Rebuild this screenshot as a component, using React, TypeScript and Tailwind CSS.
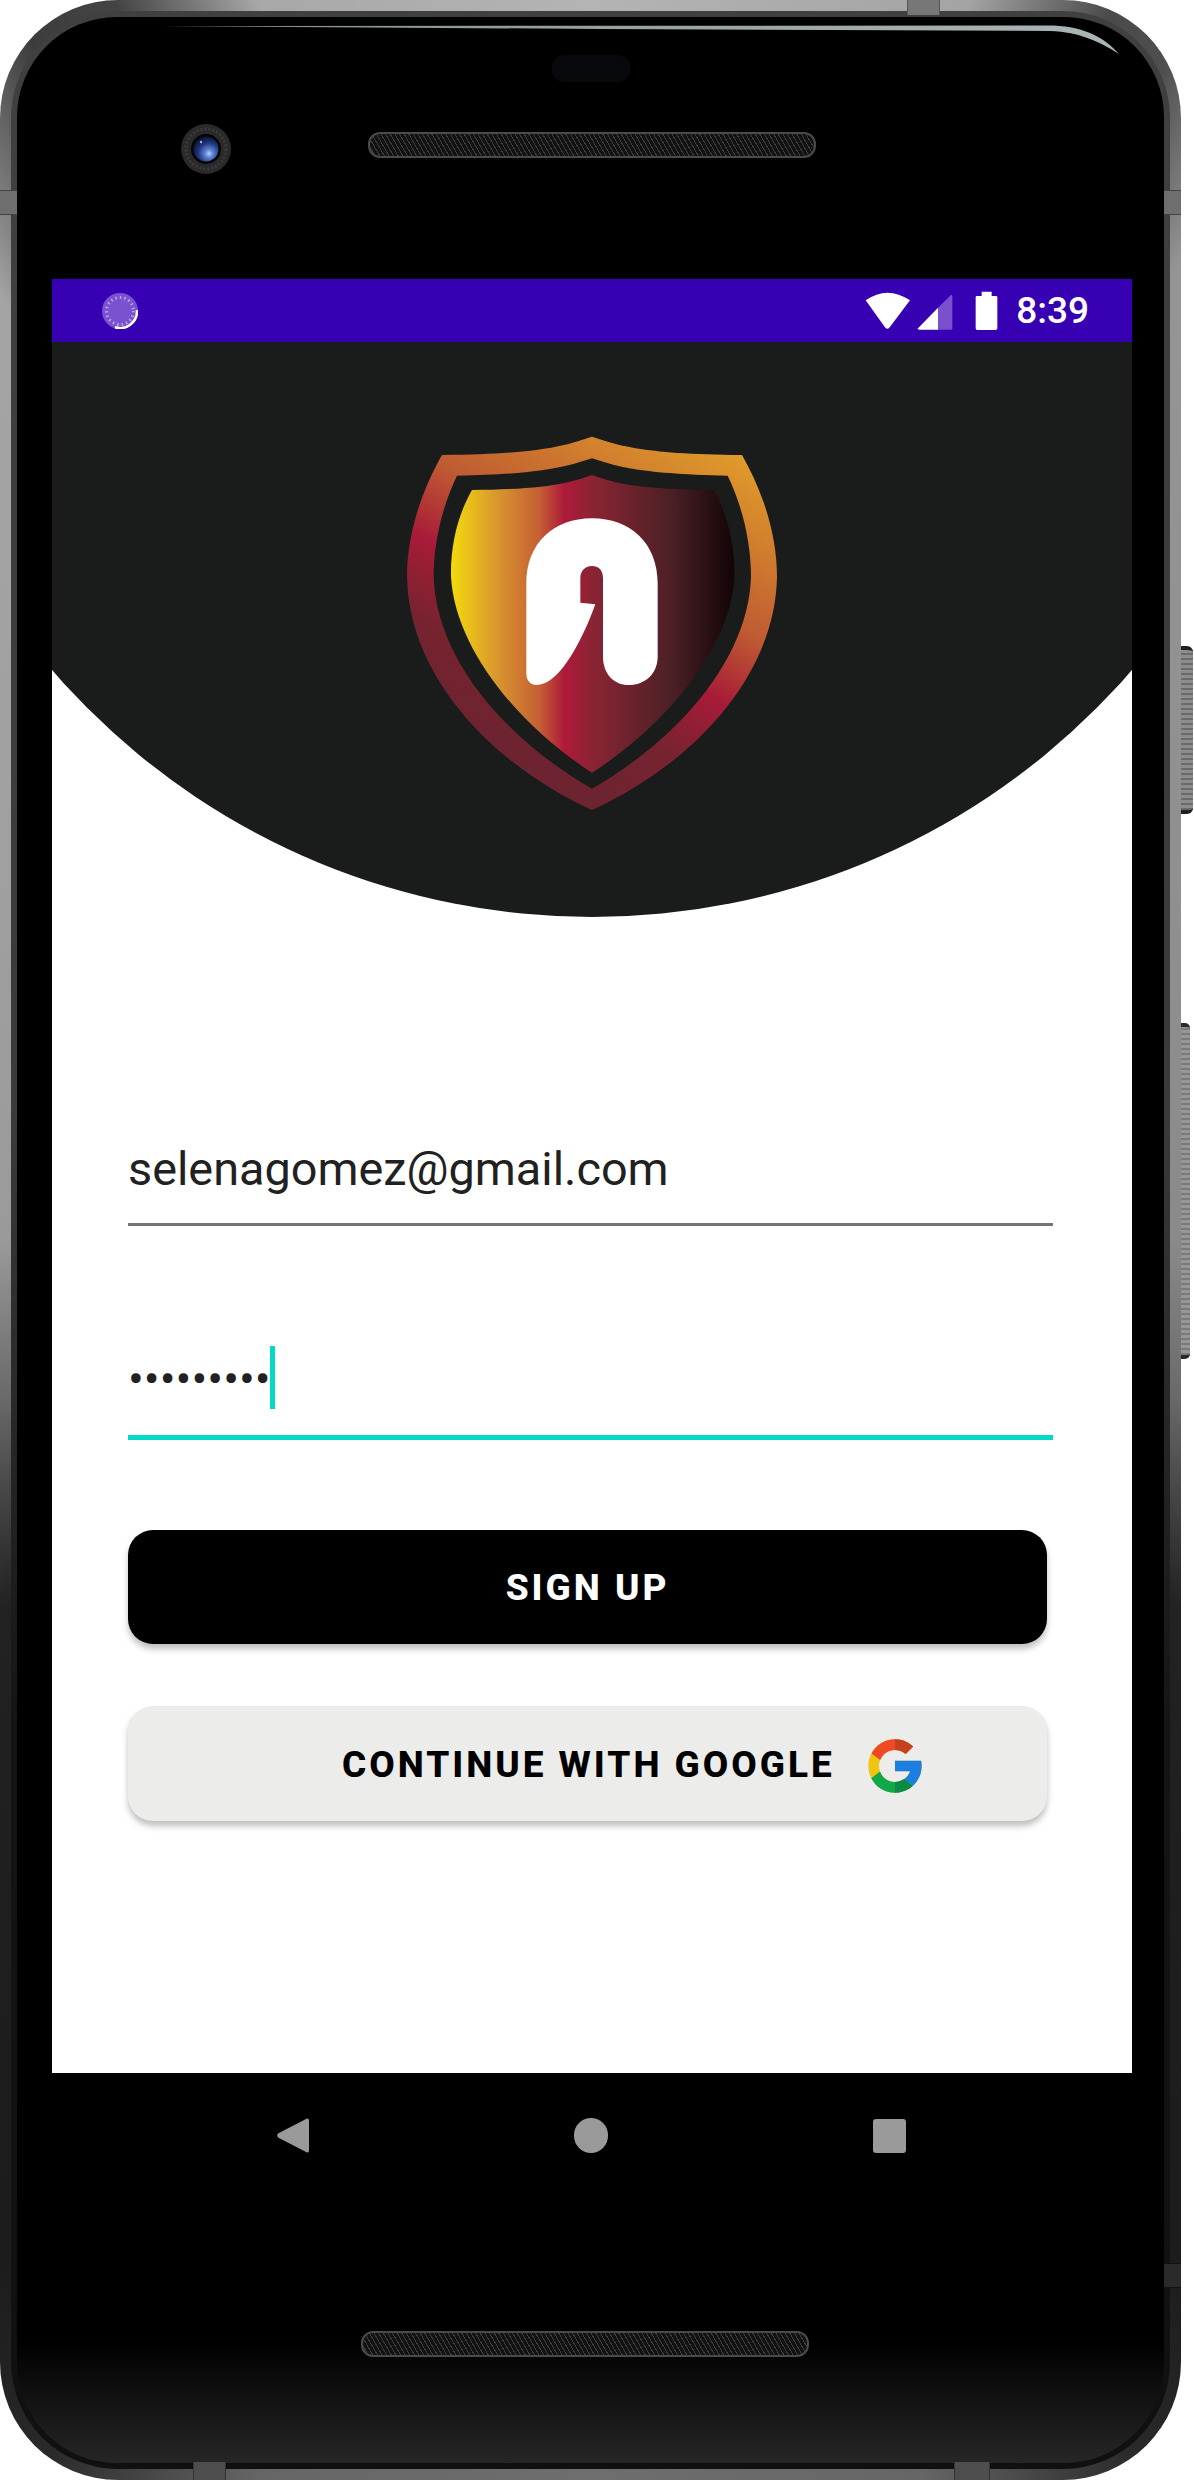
import React from 'react';

function Speaker({ className }: { className: string }) {
  return (
    <div
      className={`h-[26px] w-[448px] rounded-[12px] border-2 border-[#4a4a48] bg-[#151515] bg-[repeating-linear-gradient(60deg,#3d3d3b_0,#3d3d3b_1px,#121212_1px,#121212_4px)] ${className}`}
    />
  );
}

function Camera() {
  return (
    <svg width="50" height="50" viewBox="0 0 50 50" className="shrink-0">
      <defs>
        <radialGradient id="lens" cx="62%" cy="68%" r="70%">
          <stop offset="0%" stopColor="#b9cff5" />
          <stop offset="22%" stopColor="#5f86d8" />
          <stop offset="60%" stopColor="#22377f" />
          <stop offset="100%" stopColor="#0a1030" />
        </radialGradient>
      </defs>
      <circle cx="25" cy="25" r="25" fill="#2a2a2a" />
      <circle cx="25" cy="25" r="20" fill="none" stroke="#3a3a3a" strokeWidth="3" strokeDasharray="2 2" />
      <circle cx="25" cy="25" r="15" fill="#050505" />
      <circle cx="25" cy="25" r="12.5" fill="url(#lens)" />
      <circle cx="20" cy="18" r="1.2" fill="#9db8ee" />
    </svg>
  );
}

function Shield() {
  return (
    <svg width="424" height="420" viewBox="-1 0 1272 1260" className="shrink-0">
      <defs>
        <linearGradient id="ring" gradientUnits="userSpaceOnUse" x1="-358" y1="653" x2="193" y2="-353">
          <stop offset="0%" stopColor="#6b2430" />
          <stop offset="22%" stopColor="#76232f" />
          <stop offset="41%" stopColor="#a81b38" />
          <stop offset="60%" stopColor="#bf5b32" />
          <stop offset="100%" stopColor="#e09c2a" />
        </linearGradient>
        <linearGradient id="core" gradientUnits="userSpaceOnUse" x1="212" y1="0" x2="1062" y2="0">
          <stop offset="0%" stopColor="#f4da0c" />
          <stop offset="16%" stopColor="#d9972e" />
          <stop offset="31%" stopColor="#c56034" />
          <stop offset="40%" stopColor="#ae1a3a" />
          <stop offset="50%" stopColor="#8a2433" />
          <stop offset="78%" stopColor="#4b2025" />
          <stop offset="100%" stopColor="#120406" />
        </linearGradient>
      </defs>
      <path
        d="M635 80C560 103 500 132 185 135C125 240 80 370 80 500C85 790 320 1055 635 1200C950 1055 1185 790 1190 500C1190 370 1145 240 1085 135C770 132 710 103 635 80Z"
        fill="url(#ring)"
      />
      <path
        d="M635 145C570 165 510 192 230 197C185 290 160 400 160 500C168 750 380 990 635 1136C890 990 1104 750 1112 500C1112 400 1087 290 1042 197C760 192 700 165 635 145Z"
        fill="#1a1c1b"
      />
      <path
        d="M635 195C575 215 520 238 275 240C235 310 210 400 212 500C225 720 420 950 635 1088C850 950 1050 720 1062 500C1064 400 1040 310 1000 240C750 238 695 215 635 195Z"
        fill="url(#core)"
      />
      <path
        d="M438 520C438 400 520 325 635 325C750 325 832 400 832 520L832 740C832 790 795 825 745 825C700 825 668 790 668 740L668 505C668 480 655 468 635 468C615 468 600 482 600 505L600 578L645 583C610 680 540 825 470 825C450 825 438 812 438 790Z"
        fill="#ffffff"
      />
    </svg>
  );
}

function StatusIcons() {
  return (
    <svg width="135" height="40" viewBox="70 60 405 120" className="shrink-0">
      <path d="M75 88Q140 42 208 88L146 170Q140 176 134 170Z" fill="#ffffff" />
      <path d="M232 172L292 110L292 176L236 176Q230 176 232 172Z" fill="#ffffff" />
      <path d="M292 110L330 73Q335 70 335 76L335 172Q335 176 331 176L292 176Z" fill="#7b50cf" />
      <path d="M423 62H453V75H466Q470 75 470 79V172Q470 177 465 177H410Q405 177 405 172V79Q405 75 409 75H423Z" fill="#ffffff" />
    </svg>
  );
}

function LoadingDot() {
  return (
    <svg width="36" height="36" viewBox="0 0 36 36" className="shrink-0">
      <circle cx="18" cy="18" r="18" fill="#7a52cf" />
      <circle cx="18" cy="18" r="13.5" fill="none" stroke="#b9a3e8" strokeWidth="3" strokeDasharray="1.5 3" />
      <path d="M35 17A17 17 0 0 1 13 34.3" fill="none" stroke="#ffffff" strokeWidth="2.5" />
    </svg>
  );
}

function GoogleG() {
  return (
    <svg width="64" height="64" viewBox="0 0 48 48" className="mt-1 shrink-0">
      <defs>
        <clipPath id="gRight">
          <rect x="24" y="0" width="24" height="48" />
        </clipPath>
      </defs>
      <path
        fill="#f1c40f"
        d="M43.6 20.1H42V20H24v8h11.3C33.7 32.7 29.2 36 24 36c-6.6 0-12-5.4-12-12s5.4-12 12-12c3.1 0 5.8 1.2 8 3l5.6-5.6C34 6.1 29.3 4 24 4 13 4 4 13 4 24s9 20 20 20 20-9 20-20c0-1.3-.1-2.6-.4-3.9z"
      />
      <path fill="#ef4a25" d="M6.3 14.7l6.6 4.8C14.7 15.1 19 12 24 12c3.1 0 5.8 1.2 8 3l5.6-5.6C34 6.1 29.3 4 24 4 16.3 4 9.7 8.3 6.3 14.7z" />
      <path fill="#10a84a" d="M24 44c5.2 0 9.9-2 13.4-5.2l-6.2-5.2C29.2 35.1 26.7 36 24 36c-5.2 0-9.6-3.3-11.3-7.9l-6.5 5C9.5 39.6 16.2 44 24 44z" />
      <g clipPath="url(#gRight)">
        <path fill="#c5401f" d="M6.3 14.7l6.6 4.8C14.7 15.1 19 12 24 12c3.1 0 5.8 1.2 8 3l5.6-5.6C34 6.1 29.3 4 24 4 16.3 4 9.7 8.3 6.3 14.7z" />
        <path fill="#0d8a45" d="M24 44c5.2 0 9.9-2 13.4-5.2l-6.2-5.2C29.2 35.1 26.7 36 24 36c-5.2 0-9.6-3.3-11.3-7.9l-6.5 5C9.5 39.6 16.2 44 24 44z" />
      </g>
      <path fill="#1a7fe0" d="M43.6 20.1H42V20H24v8h11.3c-.8 2.2-2.2 4.2-4.1 5.6l6.2 5.2C37 39.2 44 34 44 24c0-1.3-.1-2.6-.4-3.9z" />
    </svg>
  );
}

export default function App() {
  return (
    <div className="h-[2480px] w-[1194px] overflow-hidden bg-white font-['Roboto',sans-serif]">
      <div className="relative h-[2480px] w-[1181px]">
        {/* side buttons */}
        <div className="absolute top-[646px] left-[1178px] h-[168px] w-[15px] rounded-r-[6px] border-y-4 border-y-[#1f1f1f] bg-[#7d7d7d] bg-[repeating-linear-gradient(0deg,#6a6a6a_0,#6a6a6a_2px,#8d8d8d_2px,#8d8d8d_5px)]" />
        <div className="absolute top-[1023px] left-[1178px] h-[336px] w-[12px] rounded-r-[5px] border-y-4 border-y-[#2a2a2a] bg-[#8c8c8c] bg-[repeating-linear-gradient(0deg,#7a7a7a_0,#7a7a7a_2px,#979797_2px,#979797_5px)]" />

        <div className="relative h-full w-full rounded-[118px] bg-[conic-gradient(#b4b4b4_0deg,#a4a4a4_17deg,#4a4a4a_23deg,#4e4e4e_26deg,#949494_31deg,#8a8a8a_90deg,#6a6a6a_105deg,#222222_122deg,#1c1c1c_150deg,#2a2a2a_156deg,#666666_165deg,#6e6e6e_180deg,#666666_195deg,#2a2a2a_204deg,#1c1c1c_210deg,#222222_238deg,#6a6a6a_255deg,#9a9a9a_270deg,#a4a4a4_328deg,#3c3c3c_335deg,#444444_339deg,#a8a8a8_345deg,#b4b4b4_360deg)] p-[11px]">
          <div className="h-full w-full rounded-[107px] bg-[linear-gradient(to_bottom,#404040_0%,#3a3a3a_45%,#141414_70%,#101010_100%)] p-[6px]">
            <div className="flex h-full w-full flex-col rounded-[100px] bg-[linear-gradient(to_bottom,#000000_95%,#262626_100%)] pr-[32px] pl-[35px]">
              {/* top bezel */}
              <div className="h-[262px] pt-[38px]">
                <div className="ml-[500px] h-[27px] w-[78px] rounded-[12px] bg-[#07090c]" />
                <div className="mt-[42px] flex items-start pl-[129px]">
                  <Camera />
                  <Speaker className="mt-[8px] ml-[137px]" />
                </div>
              </div>

              {/* screen */}
              <div className="h-[1794px] w-[1080px] bg-white">
                <div className="flex h-[63px] items-center bg-[#3700b3] pr-[43px] pl-[50px]">
                  <LoadingDot />
                  <div className="ml-auto">
                    <StatusIcons />
                  </div>
                  <span className="ml-[17px] text-[37px] leading-none font-medium text-white">8:39</span>
                </div>

                <div className="flex h-[575px] justify-center bg-[#1a1c1b] pt-[68px] [clip-path:circle(714px_at_50%_-139px)]">
                  <Shield />
                </div>

                <div className="px-[76px] pt-[224px]">
                  <div className="w-[925px] border-b-[3px] border-[#757575] pb-[26px]">
                    <span className="block text-[46.8px] leading-[56px] text-[#212121]">selenagomez@gmail.com</span>
                  </div>

                  <div className="mt-[120px] w-[925px] border-b-[5px] border-[#03dac5] pb-[26px]">
                    <div className="flex h-[63px] items-center">
                      <span className="mt-[2px] text-[47px] leading-[56px] text-[#212121]">•••••••••</span>
                      <span className="ml-[-1px] h-[63px] w-[5px] bg-[#03dac5]" />
                    </div>
                  </div>

                  <button className="mt-[90px] flex h-[114px] w-[919px] items-center justify-center rounded-[25px] bg-black pt-[2px] text-[37px] font-extrabold tracking-[0.08em] text-white shadow-[0_5px_6px_rgba(0,0,0,0.25)]">
                    SIGN UP
                  </button>

                  <button className="mt-[62px] flex h-[115px] w-[919px] items-center rounded-[25px] bg-[#ecedea] pl-[214px] text-[37px] font-extrabold tracking-[0.08em] text-black shadow-[0_5px_6px_rgba(0,0,0,0.25)]">
                    <span className="pt-[2px]">CONTINUE WITH GOOGLE</span>
                    <span className="ml-[28px]">
                      <GoogleG />
                    </span>
                  </button>
                </div>
              </div>

              {/* bottom bezel */}
              <div className="pt-[45px]">
                <div className="flex h-[35px] items-center pl-[225px]">
                  <svg width="32" height="35" viewBox="0 0 32 35" className="shrink-0">
                    <path d="M30 0.5Q32 0 32 3V32Q32 35 30 34.5L1 19.5Q-0.5 17.5 1 15.5Z" fill="#9a9a9a" />
                  </svg>
                  <div className="ml-[265px] h-[35px] w-[34px] rounded-full bg-[#9a9a9a]" />
                  <div className="ml-[265px] h-[34px] w-[33px] rounded-[3px] bg-[#9a9a9a]" />
                </div>
                <Speaker className="mt-[178px] ml-[309px]" />
              </div>
            </div>
          </div>

          {/* glass highlight */}
          <svg width="1181" height="80" viewBox="0 0 1181 80" className="pointer-events-none absolute top-0 left-0">
            <defs>
              <linearGradient id="glare" x1="0" y1="0" x2="1" y2="0">
                <stop offset="0%" stopColor="#7f8c8c" />
                <stop offset="40%" stopColor="#93a0a0" />
                <stop offset="100%" stopColor="#aab5b5" />
              </linearGradient>
            </defs>
            <path d="M160 26L1054 25.5C1085 27 1105 38 1119 54C1100 42 1080 32 1050 31L600 29Z" fill="url(#glare)" />
          </svg>

          {/* band seams */}
          <div className="absolute top-0 left-[907px] h-[15px] w-[33px] border-x border-x-[#555555] bg-[#777777]" />
          <div className="absolute top-[190px] left-0 h-[25px] w-[17px] border-y border-y-[#444444] bg-[#6e6e6e]" />
          <div className="absolute top-[190px] left-[1164px] h-[25px] w-[17px] border-y border-y-[#444444] bg-[#6e6e6e]" />
          <div className="absolute top-[2263px] left-[1164px] h-[25px] w-[17px] border-y border-y-[#111111] bg-[#2a2a2a]" />
          <div className="absolute top-[2462px] left-[193px] h-[18px] w-[33px] border-x border-x-[#333333] bg-[#4e4e4e]" />
          <div className="absolute top-[2462px] left-[954px] h-[18px] w-[36px] border-x border-x-[#333333] bg-[#4e4e4e]" />
        </div>
      </div>
    </div>
  );
}
